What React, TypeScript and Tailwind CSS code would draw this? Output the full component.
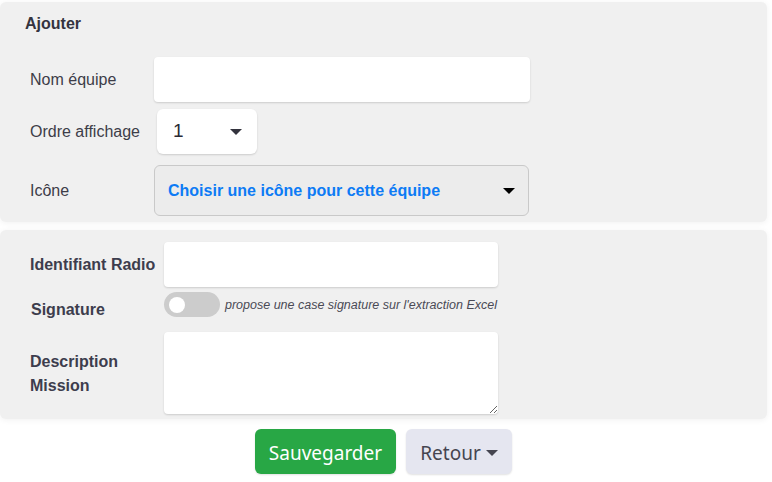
import React from 'react'

const Caret: React.FC<{ className?: string }> = ({ className }) => (
  <svg viewBox="0 0 10 5" className={className} fill="currentColor">
    <path d="M0 0h10L5 5z" />
  </svg>
)

export default function App() {
  return (
    <div className="w-[772px] h-[482px] bg-white pt-[2px] pr-[5px] font-['Liberation_Sans',Arial,sans-serif]">
      <div className="h-[220px] rounded-md bg-[#f0f0f0] shadow-[0_1px_6px_rgba(0,0,0,0.06)] pl-[25px] pt-[13px]">
        <div className="h-[18px] leading-[18px] text-[16px] font-bold text-[#34343f]">Ajouter</div>
        <div className="mt-[24px] flex items-center h-[45px]">
          <label className="w-[129px] pl-[5px] text-[16px] text-[#3d3d48]">Nom équipe</label>
          <input className="w-[376px] h-[45px] rounded bg-white shadow-[0_1px_2px_rgba(0,0,0,0.15)] outline-none" />
        </div>
        <div className="mt-[7px] flex items-center h-[45px]">
          <label className="w-[132px] pl-[5px] text-[16px] text-[#3d3d48]">Ordre affichage</label>
          <div className="w-[100px] h-[45px] rounded-md bg-white shadow-[0_1px_2px_rgba(0,0,0,0.15)] flex items-center pl-[16px] pr-[15px] justify-between">
            <span className="text-[19px] text-[#2a2a35]">1</span>
            <Caret className="w-[12px] h-[6px] text-[#33333d]" />
          </div>
        </div>
        <div className="mt-[11px] flex items-center h-[51px]">
          <label className="w-[129px] pl-[5px] text-[16px] text-[#3d3d48]">Icône</label>
          <div className="w-[375px] h-[51px] rounded-md bg-[#ececec] border border-[#c9c9c9] flex items-center pl-[13px] pr-[13px] justify-between">
            <span className="text-[16px] font-bold text-[#0d7bf5]">Choisir une icône pour cette équipe</span>
            <Caret className="w-[12px] h-[6px] text-black" />
          </div>
        </div>
      </div>

      <div className="mt-[8px] h-[189px] rounded-md bg-[#f0f0f0] shadow-[0_1px_6px_rgba(0,0,0,0.06)] pt-[12px]">
        <div className="flex items-center h-[45px]">
          <label className="w-[164px] pl-[30px] text-[16px] font-bold text-[#3d3d4d] whitespace-nowrap">Identifiant Radio</label>
          <input className="w-[334px] h-[45px] rounded bg-white shadow-[0_1px_2px_rgba(0,0,0,0.15)] outline-none" />
        </div>
        <div className="mt-[5px] flex h-[35px]">
          <label className="w-[164px] pl-[31px] pt-[6px] text-[16px] font-bold text-[#3d3d4d]">Signature</label>
          <div className="flex items-start">
            <div className="w-[56px] h-[25px] rounded-full bg-[#cccccc] flex items-center pl-[5px]">
              <div className="w-[16px] h-[16px] rounded-full bg-white" />
            </div>
            <span className="ml-[5px] mt-[4px] text-[12.5px] italic text-[#4a4a55] whitespace-nowrap">
              propose une case signature sur l'extraction Excel
            </span>
          </div>
        </div>
        <div className="mt-[5px] flex">
          <label className="w-[164px] pl-[30px] pt-[18px] text-[16px] leading-[24px] font-bold text-[#3d3d4d]">
            Description
            <br />
            Mission
          </label>
          <textarea className="w-[334px] h-[82px] rounded bg-white shadow-[0_1px_2px_rgba(0,0,0,0.15)] outline-none block" />
        </div>
      </div>

      <div className="mt-[10px] flex justify-center gap-[10px] font-['Noto_Sans',sans-serif]">
        <button className="w-[141px] h-[45px] pt-[3px] rounded-md bg-[#28a745] text-white text-[19px] shadow-[0_1px_2px_rgba(0,0,0,0.12)]">
          Sauvegarder
        </button>
        <button className="w-[106px] h-[45px] pt-[3px] rounded-md bg-[#e5e6f0] text-[#454550] text-[19px] flex items-center justify-center gap-[5px] shadow-[0_1px_2px_rgba(0,0,0,0.12)]">
          Retour
          <Caret className="w-[12px] h-[6px] text-[#454550]" />
        </button>
      </div>
    </div>
  )
}
